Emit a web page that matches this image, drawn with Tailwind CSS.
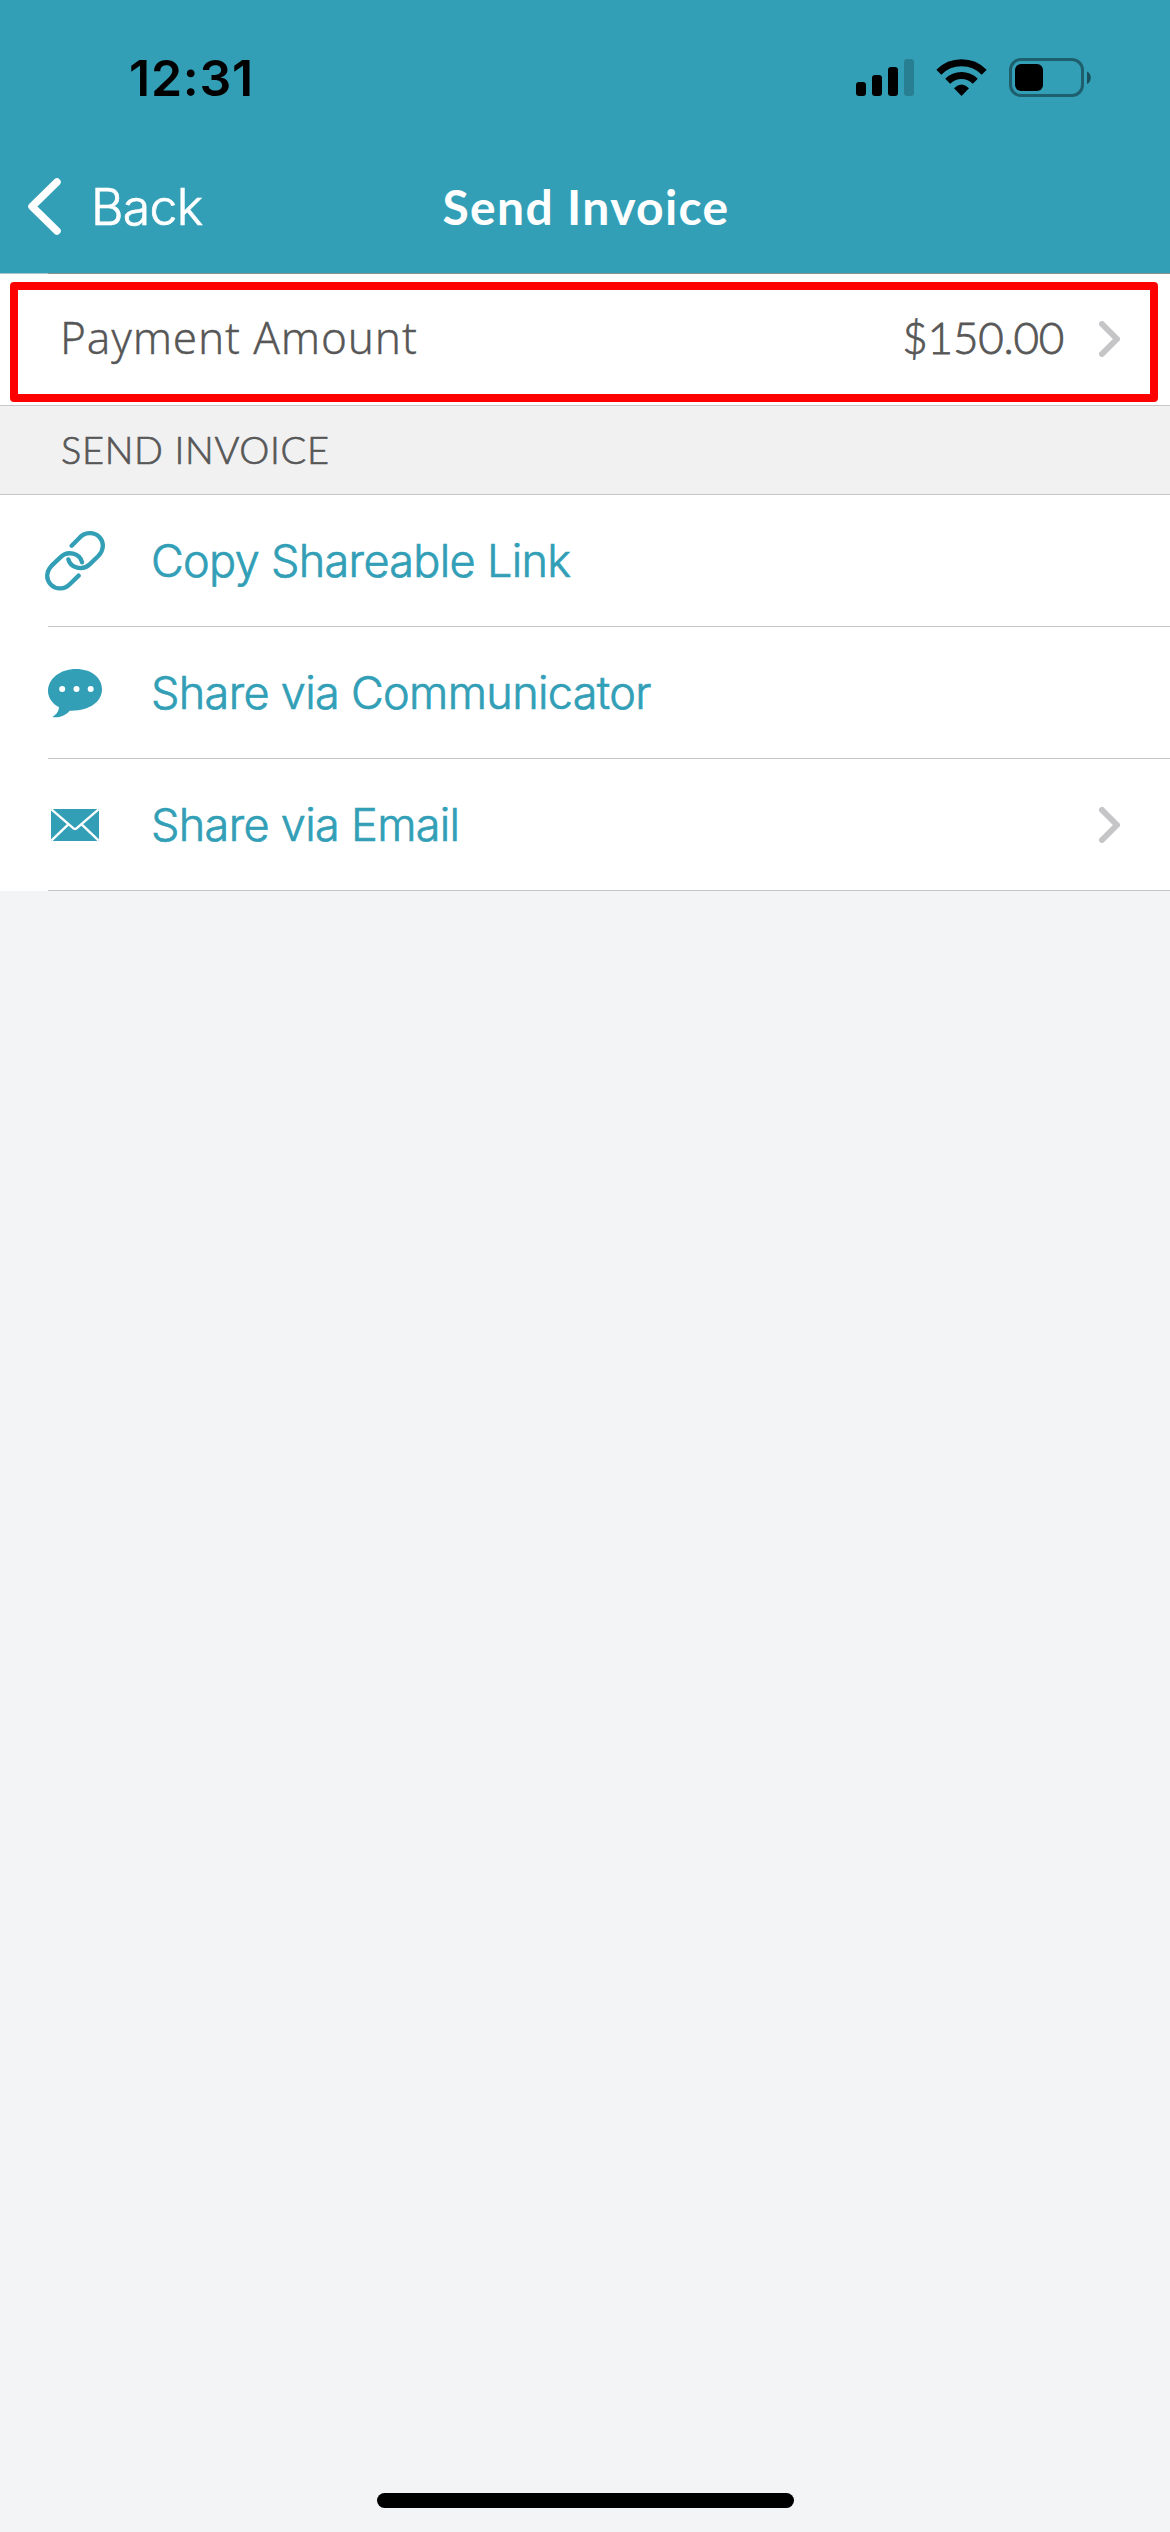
<!DOCTYPE html>
<html lang="en">
<head>
<meta charset="utf-8">
<title>Send Invoice</title>
<script src="https://cdn.jsdelivr.net/npm/@tailwindcss/browser@4"></script>
</head>
<body class="flex h-[2532px] w-[1170px] flex-col overflow-hidden bg-[#f3f4f6] font-['Inter',sans-serif] whitespace-nowrap">
<header class="h-[273px] bg-[#329fb7]">
  <div class="flex h-[156px] items-center justify-between pr-[78px] pl-[129px]">
    <span class="text-[50px] leading-[60px] font-semibold tracking-[0.75px] text-black">12:31</span>
    <svg class="h-[40px] w-[236px]" viewBox="0 0 236 40">
      <rect x="0" y="24" width="10" height="14" rx="3"/>
      <rect x="16" y="17" width="10" height="21" rx="3"/>
      <rect x="32" y="9" width="10" height="29" rx="3"/>
      <rect x="48" y="1" width="10" height="37" rx="3" opacity=".2"/>
      <g fill="none" stroke="#000" stroke-width="7">
        <path d="M82.8 14.200a32 32 0 0 1 45.400 0"/>
        <path d="M91.700 23.200a19.600 19.600 0 0 1 27.600 0"/>
      </g>
      <path d="M98 30.200q7.500-7.400 15 0L105.500 38z"/>
      <rect x="154.500" y="1.500" width="72" height="36" rx="10.500" fill="none" stroke="#000" stroke-opacity=".4" stroke-width="3"/>
      <rect x="159" y="6" width="28" height="27" rx="6"/>
      <path d="M231 13.500c5 2 5 10.500 0 12.500z" opacity=".5"/>
    </svg>
  </div>
  <div class="grid h-[103px] grid-cols-3 items-center pb-[2px] text-white">
    <div class="flex items-center gap-[30px] pl-[28px]">
      <svg class="h-[57px] w-[33px]" viewBox="0 0 33 57" fill="none" stroke="#fff" stroke-width="7.500" stroke-linecap="round" stroke-linejoin="round"><path d="M29 4L4 28.500L29 53"/></svg>
      <span class="text-[50px] leading-[60px] font-light tracking-[-0.7px] [-webkit-text-stroke:0.7px_#fff]">Back</span>
    </div>
    <h1 class="pl-[2px] text-center font-['Lato',sans-serif] text-[48px] leading-[60px] font-bold tracking-[1.35px]">Send Invoice</h1>
  </div>
</header>
<main class="flex flex-col bg-white">
  <div class="flex h-px bg-[#8a8f90]"><div class="w-12 bg-[#b5c6ca]"></div></div>
  <div class="relative flex h-[132px] items-center border-b border-[#c8c7cc] pr-[50px] pl-[60px] text-[44px] leading-[54px] font-light text-[#575757]">
    <span class="flex-1 pb-[5px] font-['Noto_Sans',sans-serif] tracking-[0.85px] [-webkit-text-stroke:0.3px_#575757]">Payment Amount</span>
    <span class="pb-[5px] font-['Lato',sans-serif] tracking-[-0.25px] [-webkit-text-stroke:0.8px_#575757]">$150.00</span>
    <svg class="-mt-px ml-[35px] h-[36px] w-[21px]" viewBox="0 0 21 36" fill="none" stroke="#c5c5c7" stroke-width="6" stroke-linecap="round" stroke-linejoin="round"><path d="M3 3L18 18L3 33"/></svg>
    <div class="absolute top-[8px] left-[10px] h-[120px] w-[1148px] rounded-[4px] border-8 border-[#ff0000]"></div>
  </div>
  <h2 class="flex h-[89px] items-center border-b border-[#c8c7cc] bg-[#f1f1f1] pb-[2px] pl-[61px] font-['Lato',sans-serif] text-[38px] leading-[48px] font-light tracking-[0.65px] text-[#575757] [-webkit-text-stroke:0.7px_#575757]">SEND INVOICE</h2>
  <ul class="text-[45px] leading-[54px] font-light tracking-[-0.67px] text-[#329fb7] [-webkit-text-stroke:0.7px_#329fb7]">
    <li class="pl-12">
      <div class="flex h-[132px] items-center border-b border-[#c5c5c7]">
        <svg class="-ml-[3px] h-[61px] w-[60px]" viewBox="135 121 180 183" fill="none" stroke="#329fb7" stroke-width="13" stroke-linecap="round" stroke-linejoin="round">
          <path d="M215 168L238 145C253 127 282 125 298 142C313 158 312 181 295 199L269 224C248 244 211 236 205 209"/>
          <path d="M236 258L210 283C194 300 168 300 153 285C137 269 138 246 155 228L181 203C203 181 240 191 246 218"/>
        </svg>
        <span class="ml-[46px]">Copy Shareable Link</span>
      </div>
    </li>
    <li class="pl-12">
      <div class="flex h-[132px] items-center border-b border-[#c5c5c7]">
        <svg class="mt-[2px] h-[49px] w-[54px]" viewBox="144 537 162 147">
          <path fill="#329fb7" d="M228 537C274 537 306 563 306 598C306 636 267 664 209 662C198 674 184 683 160 682C156 681 160 679 164 676C173 669 176 661 177 652C157 641 144 623 144 603C144 566 181 537 228 537Z"/>
          <g fill="#fff"><circle cx="186.500" cy="597" r="9"/><circle cx="229.500" cy="597" r="9"/><circle cx="272" cy="597" r="9"/></g>
        </svg>
        <span class="ml-[49px]">Share via Communicator</span>
      </div>
    </li>
    <li class="pl-12">
      <div class="flex h-[132px] items-center border-b border-[#c5c5c7] pr-[50px]">
        <svg class="mt-px ml-[3px] h-[32px] w-[48px]" viewBox="0 0 144 96">
          <rect width="144" height="96" fill="#329fb7"/>
          <path d="M1 1L63 54Q72 66 81 54L143 1M1 95L52 46M143 95L92 46" fill="none" stroke="#fff" stroke-width="7"/>
        </svg>
        <span class="ml-[52px] flex-1">Share via Email</span>
        <svg class="h-[36px] w-[21px]" viewBox="0 0 21 36" fill="none" stroke="#c5c5c7" stroke-width="6" stroke-linecap="round" stroke-linejoin="round"><path d="M3 3L18 18L3 33"/></svg>
      </div>
    </li>
  </ul>
</main>
<div class="mx-auto mt-auto mb-[24px] h-[15px] w-[417px] rounded-full bg-black"></div>
</body>
</html>
